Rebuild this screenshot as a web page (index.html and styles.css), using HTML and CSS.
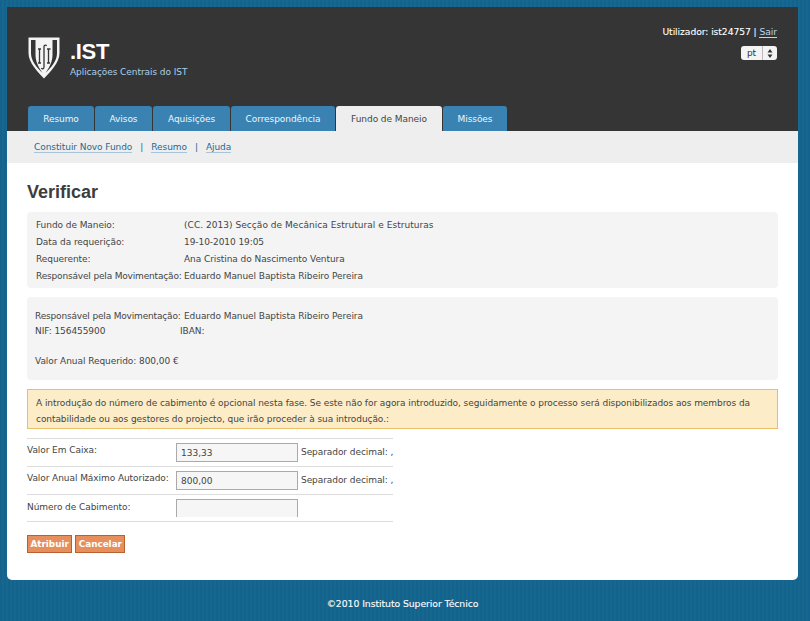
FILE: index.html
```html
<!DOCTYPE html>
<html lang="pt">
<head>
<meta charset="utf-8">
<title>Verificar</title>
<link rel="stylesheet" href="styles.css">
</head>
<body>
<div class="page">
  <header class="top">
    <div class="top-main">
      <div class="brand">
        <svg class="logo" width="32" height="42" viewBox="0 0 32 42" aria-hidden="true">
          <path d="M0.500 0.500H31.500V16C31.500 26 22 35 16 41.500C10 35 0.500 26 0.500 16Z" fill="#f4f4f4"/>
          <path d="M3 3H7.500V18C7.500 25 11 31 14.500 36C8.500 30 3 24 3 16Z" fill="#353535"/>
          <path d="M29 3H24.500V18C24.500 25 21 31 17.500 36C23.500 30 29 24 29 16Z" fill="#353535"/>
          <path d="M11.500 12V26M10 12H13M10 26H13M16 9.500V30C16 32 14 32.500 13.500 31M16 9.500C16 8 18 7.500 18.500 9M20.500 12V26M19 12H22.500M19 26H22" fill="none" stroke="#353535" stroke-width="1.300"/>
        </svg>
        <div class="brand-text">
          <div class="brand-name">.IST</div>
          <div class="brand-sub">Aplicações Centrais do IST</div>
        </div>
      </div>
      <div class="user">
        <div class="user-line">Utilizador: ist24757 | <a href="#" class="exit">Sair</a></div>
        <div class="lang"><span class="lang-val">pt</span><span class="lang-arrows"><svg width="6" height="9" viewBox="0 0 6 9" aria-hidden="true"><path d="M3 0L5.500 3.500H0.500ZM3 9L0.500 5.500H5.500Z" fill="#333"/></svg></span></div>
      </div>
    </div>
    <nav class="tabs">
      <a href="#" class="tab tab-resumo">Resumo</a>
      <a href="#" class="tab tab-avisos">Avisos</a>
      <a href="#" class="tab tab-aquis">Aquisições</a>
      <a href="#" class="tab tab-corr">Correspondência</a>
      <a href="#" class="tab tab-fundo active">Fundo de Maneio</a>
      <a href="#" class="tab tab-miss">Missões</a>
    </nav>
  </header>
  <nav class="subnav">
    <a href="#">Constituir Novo Fundo</a><span class="sep">|</span><a href="#">Resumo</a><span class="sep">|</span><a href="#">Ajuda</a>
  </nav>
  <main class="content">
    <h1>Verificar</h1>
    <section class="box box-info">
      <div class="k">Fundo de Maneio:</div><div class="v-wide">(CC. 2013) Secção de Mecânica Estrutural e Estruturas</div>
      <div class="k">Data da requerição:</div><div>19-10-2010 19:05</div>
      <div class="k">Requerente:</div><div>Ana Cristina do Nascimento Ventura</div>
      <div class="k k-long">Responsável pela Movimentação:</div><div>Eduardo Manuel Baptista Ribeiro Pereira</div>
    </section>
    <section class="box box-person">
      <div class="row"><span class="resp k-long">Responsável pela Movimentação:</span><span>Eduardo Manuel Baptista Ribeiro Pereira</span></div>
      <div class="row"><span class="nif">NIF: 156455900</span><span>IBAN:</span></div>
      <div class="row row-gap">Valor Anual Requerido: 800,00 €</div>
    </section>
    <div class="notice">A introdução do número de cabimento é opcional nesta fase. Se este não for agora introduzido, seguidamente o processo será disponibilizados aos membros da contabilidade ou aos gestores do projecto, que irão proceder à sua introdução.:</div>
    <form class="form">
      <div class="f-row">
        <label class="f-label">Valor Em Caixa:</label>
        <input class="f-input" type="text" value="133,33">
        <span class="f-note">Separador decimal: ,</span>
      </div>
      <div class="f-row">
        <label class="f-label">Valor Anual Máximo Autorizado:</label>
        <input class="f-input" type="text" value="800,00">
        <span class="f-note">Separador decimal: ,</span>
      </div>
      <div class="f-row f-last">
        <label class="f-label">Número de Cabimento:</label>
        <input class="f-input f-clip" type="text">
      </div>
      <div class="actions">
        <button type="button" class="btn">Atribuir</button>
        <button type="button" class="btn">Cancelar</button>
      </div>
    </form>
  </main>
  <footer class="foot">©2010 Instituto Superior Técnico</footer>
</div>
</body>
</html>
```
FILE: styles.css
```css
* { box-sizing: border-box; }
html, body { margin: 0; height: 100%; }
body {
  background-color: #156592;
  background-image: repeating-linear-gradient(90deg, #14638f 0, #14638f 2px, #17688f 2px, #17688f 4px);
  font-family: "DejaVu Sans", Verdana, sans-serif;
  font-size: 9px;
  letter-spacing: -0.07px;
  color: #444;
  overflow: hidden;
}
.page { width: 791px; margin: 0 0 0 7px; padding-top: 7px; }
.top { background: #353535; height: 124px; display: flex; flex-direction: column; justify-content: space-between; padding: 0 21px; }
.top-main { display: flex; justify-content: space-between; padding-top: 19px; }
.brand { display: flex; align-items: flex-start; margin-top: 11px; }
.logo { display: block; flex: none; }
.brand-text { margin-left: 10px; margin-top: 2px; }
.brand-name { font-family: "Liberation Sans", Arial, sans-serif; font-weight: 700; font-size: 22px; line-height: 25px; color: #fff; letter-spacing: -0.3px; }
.brand-sub { color: #a9d0ea; line-height: 12px; margin-top: 2px; }
.user { display: flex; flex-direction: column; align-items: flex-end; }
.user-line { color: #fff; font-size: 9.200px; line-height: 12px; -webkit-text-stroke: 0.1px #fff; }
.exit { color: #b5daf2; text-decoration: none; border-bottom: 1px solid #b5daf2; -webkit-text-stroke: 0; }
.lang { display: flex; width: 36px; height: 14px; margin-top: 8px; background: #f4f4f4; border-radius: 3px; color: #333; line-height: 14px; }
.lang-val { width: 22px; text-align: center; border-right: 1px solid #bbb; }
.lang-arrows { flex: 1; display: flex; align-items: center; justify-content: center; }
.tabs { display: flex; gap: 1px; }
.tab { display: block; height: 25px; padding-top: 1px; line-height: 24px; background: #3a82b2; color: #f0f6fa; text-align: center; text-decoration: none; border-radius: 3px 3px 0 0; }
.tab-resumo { width: 66px; }
.tab-avisos { width: 57px; }
.tab-aquis { width: 77px; }
.tab-corr { width: 104px; }
.tab-fundo { width: 106px; }
.tab-miss { width: 64px; }
.tab.active { background: #eee; color: #444; }
.subnav { background: #eee; height: 32px; padding: 11px 0 0 27px; line-height: 11px; color: #3b6f94; }
.subnav a { color: #2b678f; text-decoration: none; border-bottom: 1px solid #a8c4d8; }
.sep { margin: 0 8px; color: #2b678f; }
.content { background: #fff; height: 417px; padding: 19px 20px 0; border-radius: 0 0 5px 5px; }
h1 { margin: 0 0 9px; font-family: "Liberation Sans", Arial, sans-serif; font-weight: 700; font-size: 18px; line-height: 21px; letter-spacing: 0; color: #3d3d3d; }
.box { background: #f4f4f4; border-radius: 4px; }
.box-info { display: grid; grid-template-columns: 148px 1fr; grid-auto-rows: 17px; line-height: 17px; height: 76px; padding: 5px 9px 0; white-space: nowrap; }
.k-long { letter-spacing: -0.17px; }
.v-wide { letter-spacing: 0.04px; }
.box-person { margin-top: 9px; height: 83px; padding: 12px 8px 0; line-height: 15px; white-space: nowrap; }
.row { display: flex; }
.row-gap { margin-top: 15px; }
.resp { width: 149px; flex: none; }
.nif { width: 145px; flex: none; }
.notice { margin-top: 9px; height: 40px; background: #fcedc8; border: 1px solid #e8bf66; padding: 5px 8px; line-height: 16px; color: #444; }
.form { margin-top: 9px; width: 366px; }
.f-row { display: flex; align-items: flex-start; height: 28px; border-top: 1px solid #ddd; padding-top: 4px; white-space: nowrap; }
.f-last { height: 28px; border-bottom: 1px solid #ddd; }
.f-last .f-label { padding-top: 1px; }
.f-label { width: 149px; flex: none; line-height: 15px; }
.f-input { width: 122px; flex: none; height: 19px; background: #f6f6f6; border: 1px solid #aaa; font: 9px "DejaVu Sans", Verdana, sans-serif; color: #444; padding: 0 4px; margin: 0; border-radius: 0; outline: none; }
.f-clip { height: 18px; border-bottom: 0; }
.f-note { margin-left: 3px; line-height: 19px; }
.actions { display: flex; gap: 3px; margin-top: 13px; }
.btn { height: 18px; padding: 0 2.500px; background: #e68f5c; border: 1px solid #b8612f; color: #fff; font: 700 8.800px "DejaVu Sans", Verdana, sans-serif; border-radius: 0; }
.foot { color: #fff; font-size: 9.300px; text-align: center; line-height: 12px; margin-top: 18px; -webkit-text-stroke: 0.1px #fff; }
```
